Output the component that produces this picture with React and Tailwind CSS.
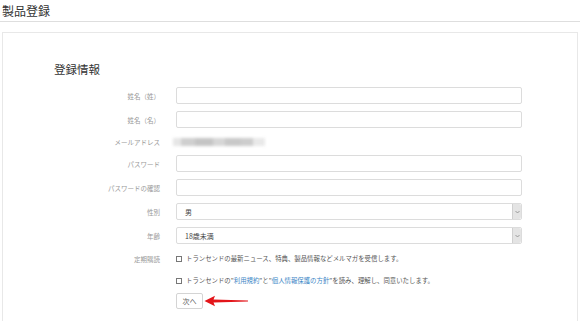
import React from "react";

const font = { fontFamily: '"Noto Sans CJK JP", "Noto Sans", sans-serif' };

function Label({ children }) {
  return (
    <div className="w-[157px] shrink-0 text-right text-[6.5px] leading-[10px] text-[#999]">
      {children}
    </div>
  );
}

function Input() {
  return <div className="h-[17px] w-[346px] rounded-[2px] border border-[#dcdcdc] bg-white" />;
}

function Select({ value }) {
  return (
    <div className="flex h-[17px] w-[346px] items-center rounded-[2px] border border-[#dcdcdc] bg-white">
      <div className="flex-1 pl-[8px] text-[7px] leading-[10px] text-[#444]">{value}</div>
      <div className="flex h-full w-[9px] items-center justify-center rounded-r-[2px] border-l border-[#d0d0d0] bg-[#e4e4e4]">
        <svg width="5" height="4" viewBox="0 0 5 4">
          <path d="M0.5 1 L2.5 3 L4.5 1" fill="none" stroke="#888" strokeWidth="0.8" />
        </svg>
      </div>
    </div>
  );
}

function Row({ label, children, className = "" }) {
  return (
    <div className={"flex items-center gap-[16px] " + className}>
      <Label>{label}</Label>
      {children}
    </div>
  );
}

function Checkbox() {
  return <div className="h-[6px] w-[6px] shrink-0 border border-[#777] bg-white" />;
}

export default function App() {
  return (
    <div className="h-[321px] w-[580px] overflow-hidden bg-white" style={font}>
      <div className="h-[22px] border-b border-[#dedede] pl-[2px] pt-[3px]">
        <div className="text-[12px] leading-[15px] text-[#333]">製品登録</div>
      </div>
      <div className="mx-[2px] mt-[10px] h-[300px] border border-[#e8e8e8] bg-white">
        <div className="pl-[51px] pt-[28px] text-[11.5px] leading-[16px] text-[#333]">登録情報</div>
        <div className="mt-[10px] flex flex-col gap-[7px]">
          <Row label="姓名（姓）">
            <Input />
          </Row>
          <Row label="姓名（名）">
            <Input />
          </Row>
          <Row label="メールアドレス" className="h-[13px]">
            <div className="-ml-[3px] flex h-[9px] items-center blur-[1.5px]">
              <div className="h-[8px] w-[8px] bg-[#e6e6e6]" />
              <div className="h-[8px] w-[14px] bg-[#cfcfcf]" />
              <div className="h-[8px] w-[18px] bg-[#c4c4c4]" />
              <div className="h-[8px] w-[12px] bg-[#d6d6d6]" />
              <div className="h-[8px] w-[16px] bg-[#c8c8c8]" />
              <div className="h-[8px] w-[12px] bg-[#cdcdcd]" />
              <div className="h-[8px] w-[12px] bg-[#e9e9e9]" />
            </div>
          </Row>
          <Row label="パスワード">
            <Input />
          </Row>
          <Row label="パスワードの確認">
            <Input />
          </Row>
          <Row label="性別">
            <Select value="男" />
          </Row>
          <Row label="年齢">
            <Select value="18歳未満" />
          </Row>
          <Row label="定期購読" className="mt-[1px] h-[14px]">
            <div className="flex items-center gap-[4px] text-[6.4px] leading-[10px] text-[#555]">
              <Checkbox />
              <span>トランセンドの最新ニュース、特典、製品情報などメルマガを受信します。</span>
            </div>
          </Row>
          <Row label="" className="mt-[1px] h-[14px]">
            <div className="flex items-center gap-[4px] text-[6.4px] leading-[10px] text-[#555]">
              <Checkbox />
              <span>
                トランセンドの"<span className="text-[#3b86c6]">利用規約</span>"と"
                <span className="text-[#3b86c6]">個人情報保護の方針</span>"を読み、理解し、同意いたします。
              </span>
            </div>
          </Row>
          <Row label="" className="-mt-[2px]">
            <div className="flex items-center">
              <div className="flex h-[16px] w-[27px] items-center justify-center rounded-[2px] border border-[#d4d4d4] bg-white text-[7px] text-[#555]">
                次へ
              </div>
              <svg className="ml-[1px]" width="45" height="12" viewBox="0 0 45 12">
                <path d="M0.5 6 L11 0.8 L9.5 4.4 L44 5.5 L44 6.5 L9.5 7.6 L11 11.2 Z" fill="#e3151a" />
              </svg>
            </div>
          </Row>
        </div>
      </div>
    </div>
  );
}
